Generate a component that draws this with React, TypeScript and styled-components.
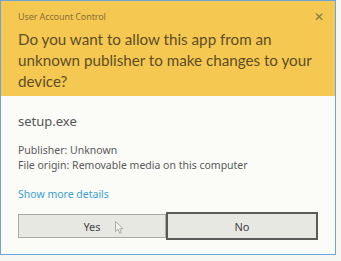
import React from "react";
import styled, { createGlobalStyle } from "styled-components";

const Global = createGlobalStyle`
  html, body { margin: 0; padding: 0; background: #f6f6f3; }
  body { font-family: "Noto Sans", "Open Sans", sans-serif; }
`;

const Dialog = styled.div`
  width: 334px;
  height: 253px;
  border: 1px solid #6aa6d8;
  background: #fbfbf8;
  display: flex;
  flex-direction: column;
  position: relative;
`;

const Header = styled.div`
  background: #f5c851;
  height: 95px;
  flex-shrink: 0;
  padding: 0 17px;
  box-sizing: border-box;
  display: flex;
  flex-direction: column;
`;

const TitleRow = styled.div`
  display: flex;
  justify-content: space-between;
  align-items: center;
  height: 30px;
  flex-shrink: 0;
`;

const Title = styled.span`
  font-size: 9px;
  color: #8a7038;
  letter-spacing: -0.1px;
`;

const Close = styled.span`
  font-size: 12px;
  color: #8a7848;
  margin-right: -6px;
`;

const Question = styled.div`
  font-family: "Lato", "Noto Sans", sans-serif;
  font-size: 15.2px;
  line-height: 21px;
  margin-top: -2px;
  color: #5e4d28;
  white-space: nowrap;
`;

const Body = styled.div`
  padding: 16px 17px 0;
  display: flex;
  flex-direction: column;
`;

const FileName = styled.div`
  font-size: 13px;
  color: #555;
  line-height: 18px;
`;

const Info = styled.div`
  margin-top: 13px;
  font-size: 10.5px;
  line-height: 15px;
  color: #5a5a5a;
`;

const Link = styled.div`
  margin-top: 14px;
  font-size: 10.5px;
  color: #3aa0d2;
  line-height: 15px;
`;

const Buttons = styled.div`
  margin-top: 10px;
  display: flex;
  align-items: center;
`;

const Button = styled.div<{ $focused?: boolean }>`
  width: ${(p) => (p.$focused ? 152 : 148)}px;
  height: ${(p) => (p.$focused ? 28 : 24)}px;
  box-sizing: border-box;
  border: ${(p) => (p.$focused ? "2px solid #5a5a58" : "1px solid #a9aaa6")};
  background: #e8e8e2;
  display: flex;
  align-items: center;
  justify-content: center;
  font-size: 11px;
  color: #444;
  position: relative;
`;

const Cursor = styled.svg`
  position: absolute;
  left: 96px;
  top: 6px;
`;

export default function App() {
  return (
    <>
      <Global />
      <Dialog>
        <Header>
          <TitleRow>
            <Title>User Account Control</Title>
            <Close>✕</Close>
          </TitleRow>
          <Question>
            Do you want to allow this app from an
            <br />
            unknown publisher to make changes to your
            <br />
            device?
          </Question>
        </Header>
        <Body>
          <FileName>setup.exe</FileName>
          <Info>
            Publisher: Unknown
            <br />
            File origin: Removable media on this computer
          </Info>
          <Link>Show more details</Link>
          <Buttons>
            <Button>
              Yes
              <Cursor width="9" height="13" viewBox="0 0 9 13">
                <path d="M0.5 0.5 L0.5 10.5 L3 8.3 L4.8 12.3 L6.4 11.6 L4.7 7.8 L8 7.8 Z" fill="#f4f4f2" stroke="#9a9a98" strokeWidth="0.8" />
              </Cursor>
            </Button>
            <Button $focused>No</Button>
          </Buttons>
        </Body>
      </Dialog>
    </>
  );
}
